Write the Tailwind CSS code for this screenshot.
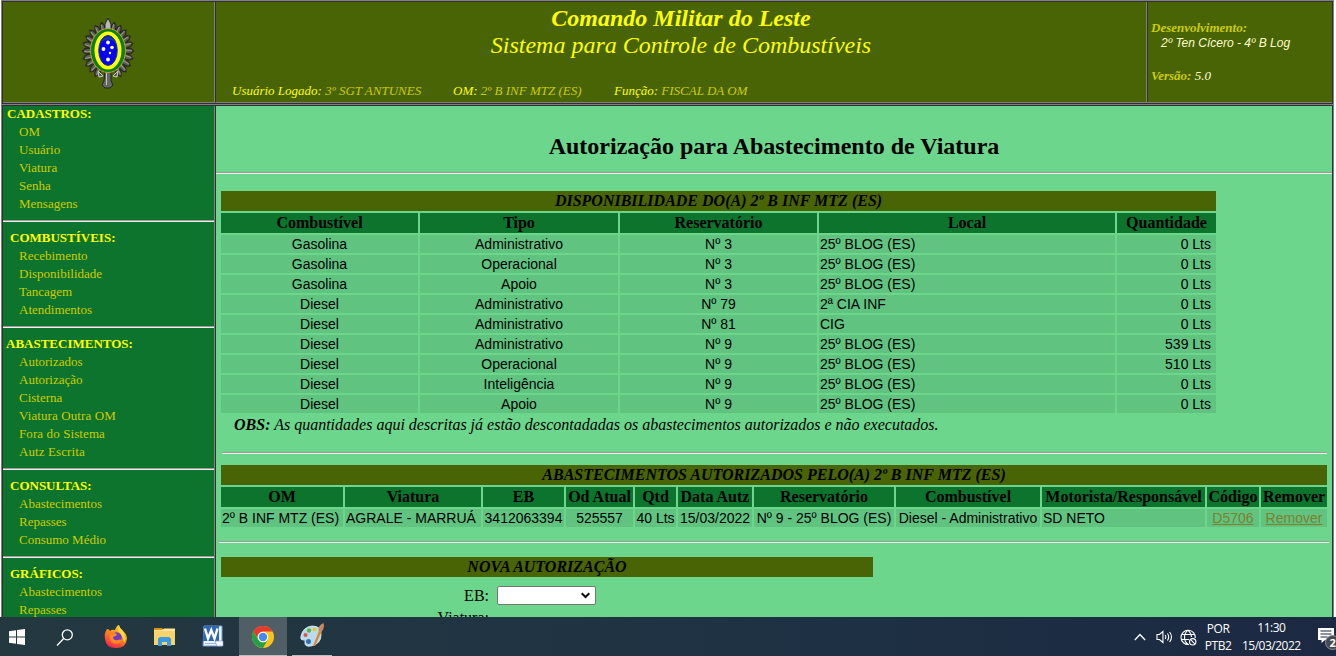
<!DOCTYPE html>
<html lang="pt-BR">
<head>
<meta charset="utf-8">
<title>Sistema para Controle de Combustíveis</title>
<script src="https://cdn.jsdelivr.net/npm/@tailwindcss/browser@4"></script>
</head>
<body class="w-[1336px] h-[656px] overflow-hidden bg-white flex flex-col font-['Liberation_Serif',serif] text-black">

<!-- framed page -->
<div class="h-[617px] pl-px pr-0.5 shrink-0 flex flex-col">
  <header class="h-[104px] shrink-0 flex bg-[#486404] border-t border-[#808080] border-x">
    <div class="flex-1 flex border border-[#303030]">
    <div class="w-[212px] shrink-0 border-r border-b border-[#808080] pt-3.5 pl-[78px]">
      <svg id="crest" class="w-[54px] h-[74px]" viewBox="0 0 54 74">
        <g id="rays"></g>
        <path d="M27 2L24 8V18H30V8Z" fill="#b8b8b8" stroke="#222" stroke-width="1"/>
        <path d="M24 55h6v10l2 4-3 3h-5l-3-3 2-4z" fill="#666" stroke="#222"/>
        <path d="M25.500 56v13" stroke="#c4c4c4"/>
        <path d="M17 55l5 5-4 1zM37 55l-5 5 4 1z" fill="#555" stroke="#ccc"/>
        <ellipse cx="27" cy="34.500" rx="17.500" ry="22" fill="#078018" stroke="#c99a35"/>
        <ellipse cx="27" cy="34.500" rx="13.500" ry="19" fill="#ffff08"/>
        <ellipse cx="27" cy="34.500" rx="9.300" ry="15" fill="#0505f0" stroke="#1c3290"/>
        <path d="M19 27q8-7 16 0l-1-3q-7-7-14 0z" fill="#1438a0"/>
        <g fill="#fff"><circle cx="27" cy="26.500" r="1.900"/><circle cx="22.500" cy="33" r="1.900"/><circle cx="31" cy="31.500" r="1.800"/><circle cx="29" cy="37" r="1.200"/><circle cx="27" cy="43.500" r="1.900"/></g>
      </svg>
    </div>
    <div class="flex-1 border-l border-l-[#303030] border-b border-b-[#808080] flex flex-col text-[#ffff00] italic whitespace-nowrap">
      <div class="text-2xl leading-[27px] text-center pt-[3px]"><b>Comando Militar do Leste</b><br>Sistema para Controle de Combustíveis</div>
      <div class="flex text-[13px] leading-[18px] pt-[23px] pl-4 text-[#cccc00]">
        <div class="w-[221px]"><span class="text-[#ffff00]">Usuário Logado:</span> 3º SGT ANTUNES</div>
        <div class="w-[161px]"><span class="text-[#ffff00]">OM:</span> 2º B INF MTZ (ES)</div>
        <div><span class="text-[#ffff00]">Função:</span> FISCAL DA OM</div>
      </div>
    </div>
    <div class="w-[186px] shrink-0 border-l border-b border-[#808080] flex">
      <div class="flex-1 border-l border-[#303030] pl-[3px] pt-[18px] text-[13px] leading-4 italic text-[#cccc00] whitespace-nowrap">
        <b>Desenvolvimento:</b>
        <div class="pl-2.5 text-xs leading-[14px] text-[#ffffcc] font-['Liberation_Sans',sans-serif]">2º Ten Cícero - 4º B Log</div>
        <div class="pt-[18px]"><b>Versão:</b> <span class="text-[#ffffcc]">5.0</span></div>
      </div>
    </div>
    </div>
  </header>

  <div class="flex-1 min-h-0 flex border-t border-x border-[#808080]">
   <div class="flex-1 flex border-t border-x border-[#303030]">
    <nav class="w-[212px] shrink-0 overflow-hidden bg-[#0c742c] border-r border-[#808080] text-[13px] leading-[18px] text-[#cccc00]">
      <div class="-mt-px">
        <b class="block pl-1 text-[#ffff00]">CADASTROS:</b>
        <div class="pl-4">OM<br>Usuário<br>Viatura<br>Senha<br>Mensagens</div>
      </div>
      <hr class="mt-[7px] mb-[7px] border-t border-b border-t-[#9a9a9a] border-b-[#eeeeee]">
      <b class="block pl-[7px] text-[#ffff00]">COMBUSTÍVEIS:</b>
      <div class="pl-4">Recebimento<br>Disponibilidade<br>Tancagem<br>Atendimentos</div>
      <hr class="mt-[7px] mb-[7px] border-t border-b border-t-[#9a9a9a] border-b-[#eeeeee]">
      <b class="block pl-[3px] text-[#ffff00]">ABASTECIMENTOS:</b>
      <div class="pl-4">Autorizados<br>Autorização<br>Cisterna<br><span class="tracking-[0.1px]">Viatura Outra OM<br>Fora do Sistema<br>Autz Escrita</span></div>
      <hr class="mt-[7px] mb-[7px] border-t border-b border-t-[#9a9a9a] border-b-[#eeeeee]">
      <b class="block pl-[7px] text-[#ffff00]">CONSULTAS:</b>
      <div class="pl-4">Abastecimentos<br>Repasses<br>Consumo Médio</div>
      <hr class="mt-[7px] mb-[7px] border-t border-b border-t-[#9a9a9a] border-b-[#eeeeee]">
      <b class="block pl-[7px] text-[#ffff00]">GRÁFICOS:</b>
      <div class="pl-4">Abastecimentos<br>Repasses</div>
    </nav>

    <main class="flex-1 overflow-hidden bg-[#6cd68c] border-l border-[#303030] text-base whitespace-nowrap">
      <h1 class="h-[66px] pt-[26px] text-2xl leading-7 font-bold text-center">Autorização para Abastecimento de Viatura</h1>
      <hr class="border-t border-b border-t-[#9a9a9a] border-b-[#eeeeee]">
      <div class="pl-[5px] pt-[17px]">
        <div class="w-[995px] h-5 leading-5 bg-[#486404] text-center font-bold italic">DISPONIBILIDADE DO(A) 2º B INF MTZ (ES)</div>
        <div id="stock" class="w-[995px] pt-0.5 grid grid-cols-[197px_198px_197px_296px_99px] gap-0.5 text-sm leading-[18px] font-['Liberation_Sans',sans-serif]"></div>
        <div class="pl-[13px] pt-[3px] h-[39px] leading-[18px] italic"><b>OBS:</b> <span>As quantidades aqui descritas já estão descontadadas os abastecimentos autorizados e não executados.</span></div>
      </div>
      <hr class="ml-1.5 mr-[5px] border-t border-b border-t-[#9a9a9a] border-b-[#eeeeee]">
      <div class="pl-[5px] pt-[11px]">
        <div class="w-[1106px] h-5 leading-5 bg-[#486404] text-center font-bold italic">ABASTECIMENTOS AUTORIZADOS PELO(A) 2º B INF MTZ (ES)</div>
        <div id="fuelings" class="w-[1106px] pt-0.5 grid grid-cols-[122px_136px_81px_67px_41px_74px_140px_144px_163px_52px_66px] gap-0.5 text-sm leading-[18px] font-['Liberation_Sans',sans-serif]"></div>
      </div>
      <hr class="mt-3.5 ml-[3px] mr-[3px] border-t border-b border-t-[#9a9a9a] border-b-[#eeeeee]">
      <div class="pl-[5px] pt-3.5">
        <div class="w-[652px] h-5 leading-5 bg-[#486404] text-center font-bold italic">NOVA AUTORIZAÇÃO</div>
        <div class="flex items-start pt-[9px] h-[29px]">
          <div class="w-[268px] text-right leading-5">EB:</div>
          <div class="ml-2 w-[99px] h-[19px] bg-white border border-[#767676] rounded-[2px] flex items-center justify-end pr-[5px]">
            <svg class="w-[9px] h-[7px]" viewBox="0 0 9 7" fill="none" stroke="#111" stroke-width="2"><path d="M.7 1.200L4.500 5l3.800-3.800"/></svg>
          </div>
        </div>
        <div class="w-[268px] pt-0.5 text-right leading-5">Viatura:</div>
      </div>
    </main>
   </div>
  </div>
</div>

<!-- taskbar -->
<footer class="h-[39px] shrink-0 flex items-stretch bg-linear-to-r from-[#23383f] via-[#1f3344] to-[#1b2942] text-white font-['Open_Sans',sans-serif]">
  <div class="w-12 shrink-0 pl-[9px] pt-3"><svg class="w-4 h-4" viewBox="0 0 16 16" fill="#fff"><path d="M0 2.200L7 1.200V7.500H0zM8 1L16 0V7.500H8zM0 8.500H7V14.800L0 13.800zM8 8.500H16V16L8 15z"/></svg></div>
  <div class="w-12 shrink-0 pl-2 pt-3"><svg class="w-[18px] h-[18px]" viewBox="0 0 18 18" fill="none" stroke="#fff" stroke-width="1.300"><circle cx="11.300" cy="5.800" r="5"/><path d="M7.700 9.500L1 16.500"/></svg></div>
  <div class="w-12 shrink-0 pl-2 pt-2"><svg class="w-6 h-6" viewBox="0 0 24 24">
    <defs><linearGradient id="ff" x1=".8" y1="0" x2=".3" y2="1"><stop offset="0" stop-color="#ffe63a"/><stop offset=".45" stop-color="#ff8a1c"/><stop offset="1" stop-color="#f7254f"/></linearGradient></defs>
    <path d="M3 4Q5 4 6 6Q8 4 11 5Q13 0 15 0Q16 4 19 6Q23 9 23 14Q22 23 12 23Q2 23 1 14Q0 8 3 4Z" fill="url(#ff)"/>
    <circle cx="12.500" cy="12.500" r="5.300" fill="#7139c8"/>
    <path d="M6 9Q9 7 13 9L12 11Q9 11 9 13Q10 16 14 15Q16 14 18 15Q15 20 9 18Q5 16 6 9" fill="#ff8b22"/>
    <path d="M15 2Q19 5 20 8Q23 14 20 18Q19 10 14 6Z" fill="#ffdc35"/></svg></div>
  <div class="w-12 shrink-0 pl-2.5 pt-2.5"><svg class="w-[22px] h-5" viewBox="0 0 22 20">
    <path d="M0 1H8L10 3H0z" fill="#d9960d"/><path d="M0 3H21V18H0z" fill="#f8d36a"/><path d="M0 3h8l2-1.500H21V4H0z" fill="#ffe69b"/>
    <path d="M4 11.500L6 10H15L17 11.500V19H13V15H8V19H4z" fill="#3c9be0"/></svg></div>
  <div class="w-[47px] shrink-0 pl-2.5 pt-2"><svg class="w-[22px] h-[22px]" viewBox="0 0 22 22">
    <path d="M2 1H20V21H1z" fill="#e9f1fb" stroke="#6f97cf"/><path d="M2 1H17V16H1z" fill="#2e67b5"/><path d="M3 18.500h14" stroke="#9db7da"/>
    <path d="M3 3.500L6 13.500L9.300 5L12.500 13.500L15.500 3.500" fill="none" stroke="#fff" stroke-width="2.400"/><path d="M13 16h8v5H15z" fill="#fff" stroke="#7b9fd0" stroke-width=".7"/></svg></div>
  <div class="w-12 shrink-0 pl-[13px] pt-[9px] bg-[#505f65] border-b border-[#b8bec0]"><svg class="w-[22px] h-[22px]" viewBox="0 0 24 24">
    <circle cx="12" cy="12" r="12" fill="#fbc41a"/><path d="M1.600 6A12 12 0 0 1 22.400 6H12A6 6 0 0 0 6.800 15z" fill="#e53a2d"/>
    <path d="M1.600 6A12 12 0 0 0 12 24L17.200 15A6 6 0 0 1 6.800 15z" fill="#24a148"/><circle cx="12" cy="12" r="5.700" fill="#fff"/><circle cx="12" cy="12" r="4.600" fill="#438bf1"/></svg></div>
  <div class="ml-[5px] w-10 shrink-0 pl-2 pt-1.5 border-b border-[#b8bec0]"><svg class="w-6 h-[26px]" viewBox="0 0 24 26">
    <path d="M1 13Q3 4 12 3Q22 3 21 12Q21 21 11 23Q4 24 5 19Q6 16 3 17Q0 17 1 13Z" fill="#b8dced" stroke="#e1f0f6" stroke-width=".8"/>
    <circle cx="5.500" cy="12" r="2" fill="#e3523f"/><circle cx="9" cy="7.500" r="2.200" fill="#5eb34b"/><circle cx="14.500" cy="6.500" r="2" fill="#f0c33c"/><circle cx="8.500" cy="18.500" r="2.500" fill="#336fb6"/>
    <path d="M13 23L19 8L21.500 9L15 23Z" fill="#df8334"/><path d="M18.500 8Q18 2 23.500 0Q25 5 21.500 9Z" fill="#c58b5d"/></svg></div>
  <div class="flex-1"></div>
  <div class="w-[194px] shrink-0 flex items-center pt-px">
    <svg class="w-3 h-2 -ml-2" viewBox="0 0 12 8" fill="none" stroke="#fff" stroke-width="1.300"><path d="M.8 7L6 1.500L11.200 7"/></svg>
    <svg class="ml-[10px] w-[17px] h-4" viewBox="0 0 17 16" fill="none" stroke="#fff" stroke-width="1.100"><path d="M1 5.500H3.500L7 2.500V13.500L3.500 10.500H1zM9.200 6Q10.500 8 9.200 10M11.500 4.500Q14 8 11.500 11.500M13.700 3Q17.500 8 13.700 13"/></svg>
    <svg class="ml-[7px] w-[17px] h-[17px]" viewBox="0 0 17 17" fill="none" stroke="#fff" stroke-width="1.100"><path d="M9 15.500A7.200 7.200 0 1 1 15.400 9M8 1Q4.500 4 4.500 8.300T8 15.500M8 1Q11.500 4 11.500 8M1.500 5.500H14.500M1.500 10.500H9"/><circle cx="12.800" cy="12.800" r="3.200"/><path d="M10.700 10.700l4.200 4.200"/></svg>
    <div class="ml-2 w-[27px] text-[12px] leading-[17px] text-center tracking-[-0.4px]">POR<br>PTB2</div>
    <div class="ml-[9px] w-[62px] text-[12px] leading-[18px] text-center tracking-[-0.5px] whitespace-nowrap">11:30<br>15/03/2022</div>
    <div class="relative ml-4 w-[18px] h-5">
      <svg class="w-4 h-[17px]" viewBox="0 0 16 17"><path d="M0 1H16V13H7L3.500 16V13H0z" fill="#fff"/><path d="M2.500 4h11M2.500 7h11M2.500 10h7" stroke="#1b2942" stroke-width="1.200"/></svg>
      <div class="absolute left-[7px] top-2 w-[15px] h-[15px] rounded-full bg-[#454950] border border-[#8b8f96] text-[11px] leading-[13px] text-center font-bold">2</div>
    </div>
  </div>
</footer>

<script>
  const cell = (text, cls) => `<div class="${cls}">${text}</div>`;
  const head = "h-5 leading-5 bg-[#0c742c] text-base font-bold text-center font-['Liberation_Serif',serif]";
  const mid = "bg-[#60c480] text-center";
  const left = "bg-[#60c480] pl-px";
  const right = "bg-[#60c480] text-right pr-[5px]";
  const link = "bg-[#60c480] text-center text-[#80802c] underline";

  const stock = [
    ["Gasolina","Administrativo","Nº 3","25º BLOG (ES)","0 Lts"],
    ["Gasolina","Operacional","Nº 3","25º BLOG (ES)","0 Lts"],
    ["Gasolina","Apoio","Nº 3","25º BLOG (ES)","0 Lts"],
    ["Diesel","Administrativo","Nº 79","2ª CIA INF","0 Lts"],
    ["Diesel","Administrativo","Nº 81","CIG","0 Lts"],
    ["Diesel","Administrativo","Nº 9","25º BLOG (ES)","539 Lts"],
    ["Diesel","Operacional","Nº 9","25º BLOG (ES)","510 Lts"],
    ["Diesel","Inteligência","Nº 9","25º BLOG (ES)","0 Lts"],
    ["Diesel","Apoio","Nº 9","25º BLOG (ES)","0 Lts"]
  ];
  document.getElementById("stock").innerHTML =
    ["Combustível","Tipo","Reservatório","Local","Quantidade"].map(t => cell(t, head)).join("") +
    stock.map(r => r.map((t, i) => cell(t, i < 3 ? mid : i === 3 ? left : right)).join("")).join("");

  document.getElementById("fuelings").innerHTML =
    ["OM","Viatura","EB","Od Atual","Qtd","Data Autz","Reservatório","Combustível","Motorista/Responsável","Código","Remover"].map(t => cell(t, head)).join("") +
    ["2º B INF MTZ (ES)","AGRALE - MARRUÁ","3412063394","525557","40 Lts","15/03/2022","Nº 9 - 25º BLOG (ES)","Diesel - Administrativo","SD NETO",'D5706','Remover']
      .map((t, i) => cell(t, i > 8 ? link : i === 0 || i === 1 || i === 8 ? left : mid)).join("");

  // metallic rays around the crest
  let rays = "";
  for (let a = 15; a < 346; a += 15) {
    if (a > 155 && a < 205) continue;
    rays += `<path transform="translate(27 35) scale(1 1.150) rotate(${a})" d="M-2.800 -15L-2 -23L0 -25.500L2 -23L2.800 -15Z" fill="#5c5c54" stroke="#292a22" stroke-width="1.200"/><path transform="translate(27 35) scale(1 1.150) rotate(${a})" d="M-.6 -16V-24" stroke="#98988f" stroke-width=".9"/>`;
  }
  document.getElementById("rays").innerHTML = rays;
</script>
</body>
</html>
